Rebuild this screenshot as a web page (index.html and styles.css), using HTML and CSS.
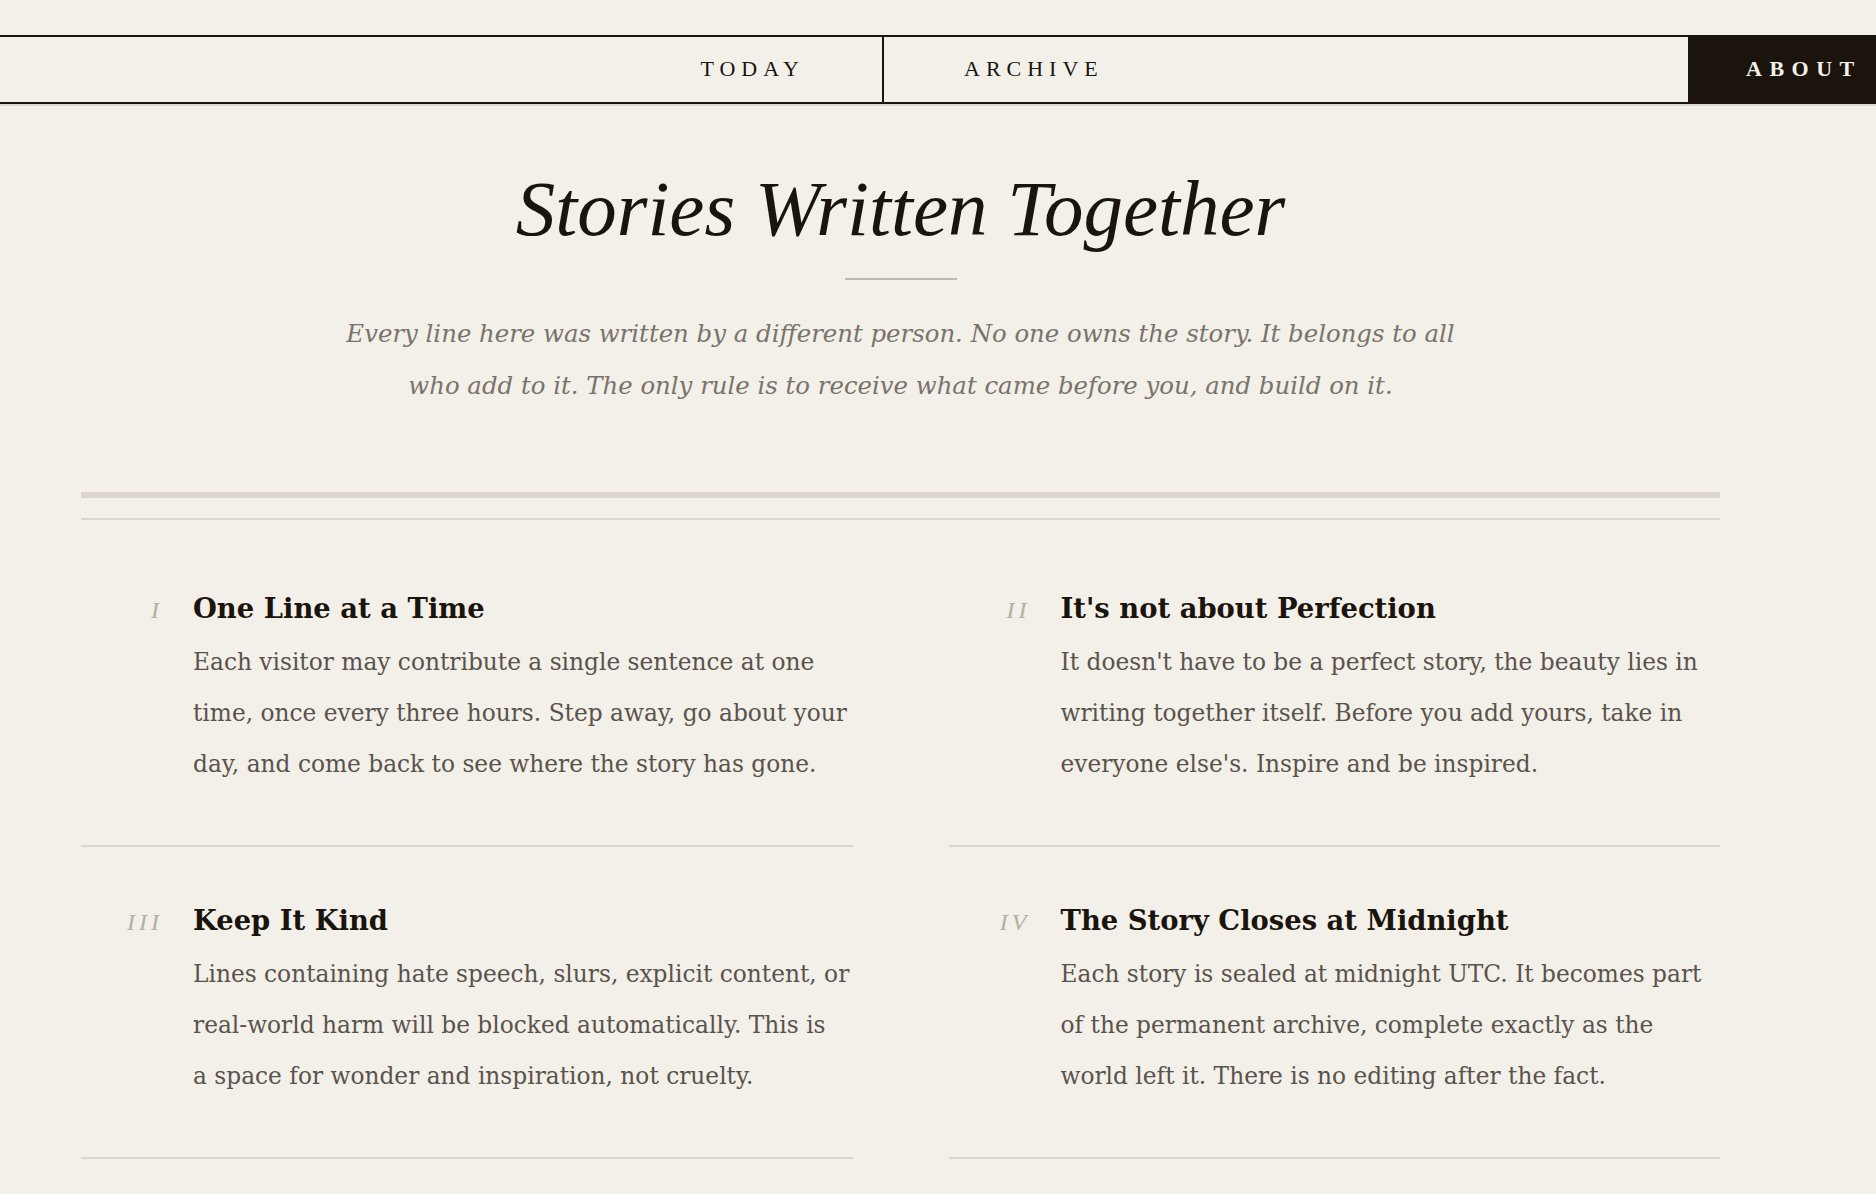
FILE: index.html
```html
<!DOCTYPE html>
<html lang="en">
<head>
<meta charset="utf-8">
<title>Stories Written Together</title>
<link rel="stylesheet" href="styles.css">
</head>
<body>
<header class="topbar">
  <nav class="nav">
    <a class="nav-item nav-today" href="#">Today</a>
    <a class="nav-item nav-archive" href="#">Archive</a>
    <a class="nav-item nav-about" href="#">About</a>
  </nav>
</header>
<main class="main">
  <section class="intro">
    <h1 class="title">Stories Written Together</h1>
    <hr class="title-rule">
    <p class="lede">Every line here was written by a different person. No one owns the story. It belongs to all who add to it. The only rule is to receive what came before you, and build on it.</p>
  </section>
  <div class="rule-thick"></div>
  <section class="rules-grid">
    <article class="rule-card">
      <span class="numeral">I</span>
      <div class="rule-body">
        <h2 class="rule-title">One Line at a Time</h2>
        <p class="rule-text">Each visitor may contribute a single sentence at one time, once every three hours. Step away, go about your day, and come back to see where the story has gone.</p>
      </div>
    </article>
    <article class="rule-card">
      <span class="numeral">II</span>
      <div class="rule-body">
        <h2 class="rule-title">It's not about Perfection</h2>
        <p class="rule-text">It doesn't have to be a perfect story, the beauty lies in writing together itself. Before you add yours, take in everyone else's. Inspire and be inspired.</p>
      </div>
    </article>
    <article class="rule-card">
      <span class="numeral">III</span>
      <div class="rule-body">
        <h2 class="rule-title">Keep It Kind</h2>
        <p class="rule-text">Lines containing hate speech, slurs, explicit content, or real-world harm will be blocked automatically. This is a&nbsp;space for wonder and inspiration, not cruelty.</p>
      </div>
    </article>
    <article class="rule-card">
      <span class="numeral">IV</span>
      <div class="rule-body">
        <h2 class="rule-title">The Story Closes at Midnight</h2>
        <p class="rule-text">Each story is sealed at midnight UTC. It becomes part of the permanent archive, complete exactly as the world left it. There is no editing after the fact.</p>
      </div>
    </article>
  </section>
</main>
</body>
</html>
```

FILE: styles.css
```css
html, body {
  margin: 0;
  padding: 0;
  background: #f3efe9;
  color: #1a140d;
  font-family: "DejaVu Serif", serif;
  overflow-x: hidden;
}

.topbar {
  padding-top: 35px;
}

.nav {
  display: flex;
  height: 69px;
  box-sizing: border-box;
  border-top: 2px solid #1a140d;
  border-bottom: 2px solid #1a140d;
  box-shadow: 0 2px 0 #dcd6ce;
}

.nav-item {
  display: flex;
  align-items: center;
  box-sizing: border-box;
  padding-bottom: 2px;
  font-family: "Liberation Serif", "Times New Roman", serif;
  font-size: 22px;
  letter-spacing: 6px;
  text-transform: uppercase;
  color: #1a140d;
  text-decoration: none;
  white-space: nowrap;
}

.nav-today {
  flex: 0 0 884px;
  justify-content: flex-end;
  padding-right: 77px;
  border-right: 2px solid #1a140d;
}

.nav-archive {
  flex: 1 1 auto;
  padding-left: 80px;
}

.nav-about {
  flex: 0 0 188px;
  margin: -2px 0;
  padding-left: 58px;
  background: #1a140d;
  color: #f3efe9;
  font-weight: 700;
  letter-spacing: 7.5px;
  overflow: hidden;
}

.main {
  width: 1639px;
  margin-left: 81px;
}

.intro {
  text-align: center;
}

.title {
  margin: 58px 0 0;
  font-family: "Liberation Serif", "Times New Roman", serif;
  font-style: italic;
  font-weight: 400;
  font-size: 79px;
  line-height: 1.2;
  color: #1a140d;
}

.title-rule {
  width: 112px;
  height: 2px;
  margin: 21px auto 0;
  border: 0;
  background: #bfb8b0;
}

.lede {
  max-width: 1140px;
  margin: 28px auto 0;
  font-family: "DejaVu Serif", serif;
  font-style: italic;
  font-size: 24.4px;
  line-height: 52px;
  color: #7a736b;
}

.rule-thick {
  height: 6px;
  margin-top: 80px;
  background: #dcd6ce;
}

.rules-grid {
  display: grid;
  grid-template-columns: 1fr 1fr;
  column-gap: 96px;
  margin-top: 20px;
  padding-top: 15px;
  border-top: 2px solid #dcd6ce;
}

.rule-card {
  display: grid;
  grid-template-columns: 78px 1fr;
  column-gap: 34px;
  align-items: baseline;
  padding: 55px 0 56px;
  border-bottom: 2px solid #dcd6ce;
}

.numeral {
  text-align: right;
  margin-right: -4px;
  font-family: "Liberation Serif", "Times New Roman", serif;
  font-style: italic;
  font-size: 24px;
  letter-spacing: 4px;
  color: #b5aea6;
}

.rule-title {
  margin: 0 0 10px;
  font-family: "DejaVu Serif", serif;
  font-weight: 700;
  font-size: 27.4px;
  line-height: 36px;
  color: #1a140d;
}

.rule-text {
  margin: 0;
  font-family: "DejaVu Serif", serif;
  font-size: 23.3px;
  line-height: 51px;
  color: #5a534b;
}
```
